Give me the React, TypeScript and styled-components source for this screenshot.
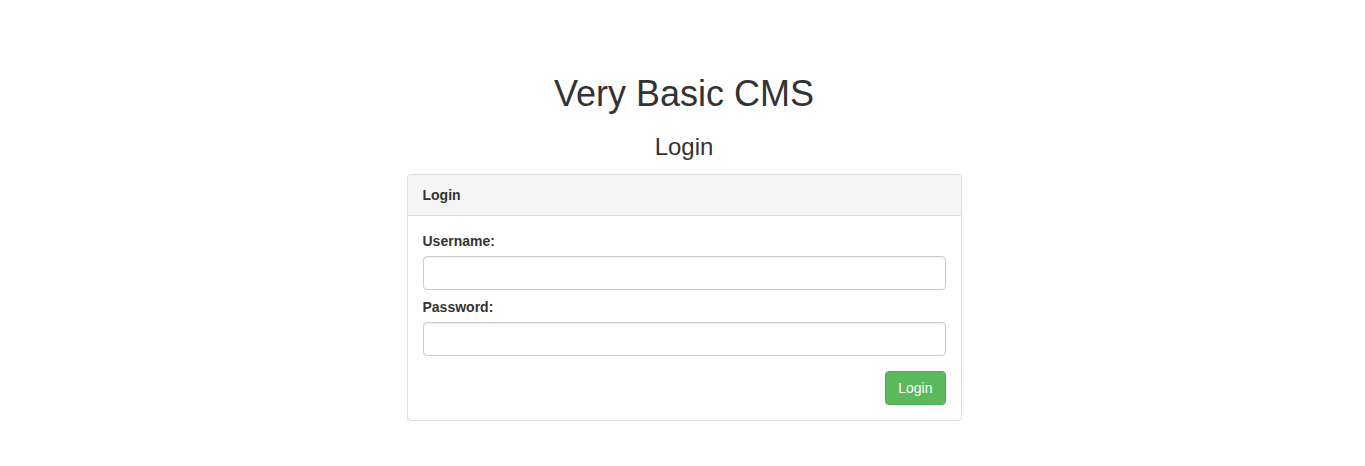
import React from "react";
import styled, { createGlobalStyle } from "styled-components";

const Global = createGlobalStyle`
  * { box-sizing: border-box; }
  html, body { margin: 0; padding: 0; background: #fff; }
  body {
    font-family: "Liberation Sans", Arial, Helvetica, sans-serif;
    font-size: 14px;
    line-height: 1.42857143;
    color: #333;
  }
`;

const Page = styled.div`
  padding: 54px 0 0 3px;
  display: flex;
  justify-content: center;
`;

const Column = styled.div`
  width: 555px;
  display: flex;
  flex-direction: column;
`;

const Title = styled.h1`
  margin: 20px 0 0;
  font-size: 36px;
  font-weight: 500;
  line-height: 1.1;
  text-align: center;
`;

const Subtitle = styled.h3`
  margin: 20px 0 14px;
  font-size: 24px;
  font-weight: 500;
  line-height: 1.1;
  text-align: center;
`;

const Panel = styled.div`
  border: 1px solid #ddd;
  border-radius: 4px;
  background: #fff;
  box-shadow: 0 1px 1px rgba(0, 0, 0, 0.05);
`;

const PanelHeading = styled.div`
  padding: 10px 15px;
  background: #f5f5f5;
  border-bottom: 1px solid #ddd;
  border-radius: 3px 3px 0 0;
  font-weight: 700;
  line-height: 20px;
`;

const PanelBody = styled.form`
  padding: 15px;
  display: flex;
  flex-direction: column;
`;

const Field = styled.div<{ $gap: number }>`
  display: flex;
  flex-direction: column;
  margin-bottom: ${(p) => p.$gap}px;
`;

const Label = styled.label`
  font-weight: 700;
  line-height: 20px;
  margin-bottom: 5px;
`;

const Input = styled.input`
  height: 34px;
  width: 100%;
  padding: 6px 12px;
  font: inherit;
  color: #555;
  background: #fff;
  border: 1px solid #ccc;
  border-radius: 4px;
  box-shadow: inset 0 1px 1px rgba(0, 0, 0, 0.075);
  outline: none;
`;

const Actions = styled.div`
  display: flex;
  justify-content: flex-end;
`;

const Button = styled.button`
  height: 34px;
  padding: 6px 12px;
  font-family: "Liberation Sans", Arial, sans-serif;
  font-size: 14px;
  line-height: 20px;
  color: #fff;
  background: #5cb85c;
  border: 1px solid #4cae4c;
  border-radius: 4px;
  cursor: pointer;
`;

export default function App() {
  return (
    <>
      <Global />
      <Page>
        <Column>
          <Title>Very Basic CMS</Title>
          <Subtitle>Login</Subtitle>
          <Panel>
            <PanelHeading>Login</PanelHeading>
            <PanelBody onSubmit={(e) => e.preventDefault()}>
              <Field $gap={7}>
                <Label htmlFor="username">Username:</Label>
                <Input id="username" type="text" />
              </Field>
              <Field $gap={15}>
                <Label htmlFor="password">Password:</Label>
                <Input id="password" type="password" />
              </Field>
              <Actions>
                <Button type="submit">Login</Button>
              </Actions>
            </PanelBody>
          </Panel>
        </Column>
      </Page>
    </>
  );
}
